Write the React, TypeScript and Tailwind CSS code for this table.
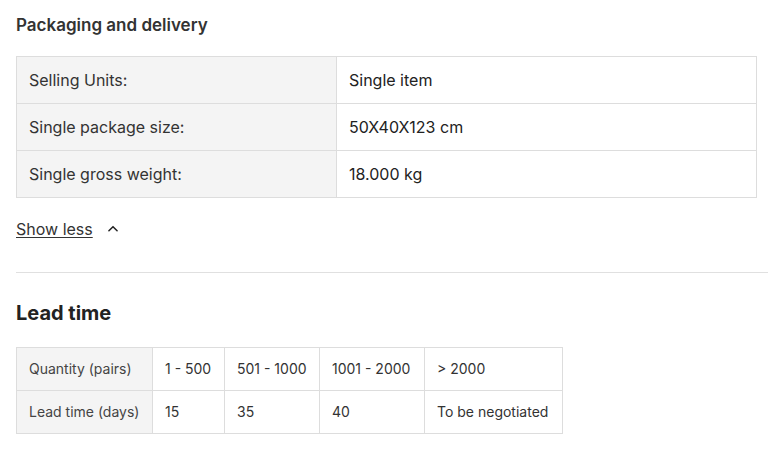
import React from 'react';

const specs = [
  ['Selling Units:', 'Single item'],
  ['Single package size:', '50X40X123 cm'],
  ['Single gross weight:', '18.000 kg'],
];

const leadCols = ['w-[136px]', 'w-[72px]', 'w-[95px]', 'w-[105px]', 'w-[138px]'];
const leadRows = [
  ['Quantity (pairs)', '1 - 500', '501 - 1000', '1001 - 2000', '> 2000'],
  ['Lead time (days)', '15', '35', '40', 'To be negotiated'],
];

export default function App() {
  return (
    <div className="min-h-[461px] bg-white pl-4 font-['Inter','Liberation_Sans',sans-serif]">
      <div className="pr-[11px]">
        <h2 className="pt-[15px] text-[17px] font-semibold leading-5 text-[#333]">Packaging and delivery</h2>

        <table className="mt-[21px] w-full table-fixed border-collapse text-base">
          <colgroup>
            <col className="w-[320px]" />
            <col />
          </colgroup>
          <tbody>
            {specs.map(([label, value]) => (
              <tr key={label} className="h-[47px]">
                <td className="border border-[#dddddd] bg-[#f4f4f4] px-3 text-[#333]">{label}</td>
                <td className="border border-[#dddddd] px-3 text-[#222]">{value}</td>
              </tr>
            ))}
          </tbody>
        </table>

        <button className="mt-[21px] flex items-center gap-[13px] text-base leading-5 text-[#333]">
          <span className="underline underline-offset-2">Show less</span>
          <svg width="14" height="14" viewBox="0 0 24 24" fill="none" stroke="#222" strokeWidth="2.6" strokeLinecap="round" strokeLinejoin="round">
            <path d="M5 15l7-7 7 7" />
          </svg>
        </button>
      </div>

      <div className="mt-[33px] border-t border-[#e0e0e0]" />

      <h2 className="mt-[28px] text-xl font-bold leading-6 text-[#222]">Lead time</h2>

      <table className="mt-[22px] table-fixed border-collapse text-sm text-[#333]">
        <colgroup>
          {leadCols.map((w, i) => (
            <col key={i} className={w} />
          ))}
        </colgroup>
        <tbody>
          {leadRows.map((row) => (
            <tr key={row[0]} className="h-[43px]">
              {row.map((cell, i) => (
                <td
                  key={i}
                  className={
                    i === 0
                      ? 'border border-[#dddddd] bg-[#f4f4f4] px-3 text-[#444]'
                      : 'border border-[#dddddd] px-3'
                  }
                >
                  {cell}
                </td>
              ))}
            </tr>
          ))}
        </tbody>
      </table>
    </div>
  );
}
